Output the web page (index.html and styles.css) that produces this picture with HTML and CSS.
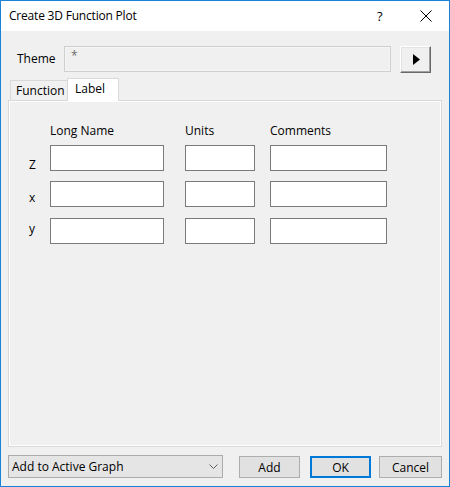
FILE: index.html
```html
<!DOCTYPE html>
<html>
<head>
<meta charset="utf-8">
<link rel="stylesheet" href="styles.css">
</head>
<body>
<div class="window">
  <div class="titlebar">
    <span class="title">Create 3D Function Plot</span>
    <span class="help">?</span>
    <svg class="close" width="12" height="12" viewBox="0 0 12 12"><path d="M0.5 0.5 L11.5 11.5 M11.5 0.5 L0.5 11.5" stroke="#000" stroke-width="1" fill="none"/></svg>
  </div>
  <div class="body">
    <div class="theme-row">
      <span class="theme-label">Theme</span>
      <div class="theme-input">*</div>
      <div class="arrow-btn"><svg width="7" height="11" viewBox="0 0 7 11"><path d="M0 0 L7 5.5 L0 11 Z" fill="#000"/></svg></div>
    </div>
    <div class="tabs">
      <div class="tab">Function</div>
      <div class="tab active">Label</div>
    </div>
    <div class="panel">
      <div class="grid head-row">
        <span></span>
        <span class="head">Long Name</span>
        <span class="head">Units</span>
        <span class="head">Comments</span>
      </div>
      <div class="grid row r1">
        <span class="rlbl rz">Z</span>
        <span class="field w-long"></span>
        <span class="field w-units"></span>
        <span class="field w-comm"></span>
      </div>
      <div class="grid row r2">
        <span class="rlbl rx">x</span>
        <span class="field w-long"></span>
        <span class="field w-units"></span>
        <span class="field w-comm"></span>
      </div>
      <div class="grid row r3">
        <span class="rlbl ry">y</span>
        <span class="field w-long"></span>
        <span class="field w-units"></span>
        <span class="field w-comm"></span>
      </div>
    </div>
    <div class="bottom">
      <div class="combo"><span>Add to Active Graph</span><svg width="9" height="5" viewBox="0 0 9 5"><path d="M0.5 0.5 L4.5 4.5 L8.5 0.5" stroke="#606060" stroke-width="1" fill="none"/></svg></div>
      <div class="btn add">Add</div>
      <div class="btn ok">OK</div>
      <div class="btn cancel">Cancel</div>
    </div>
  </div>
</div>
</body>
</html>
```
FILE: styles.css
```css
* { box-sizing: border-box; }
html, body { margin: 0; padding: 0; }
body {
  width: 450px;
  height: 487px;
  font-family: "Open Sans", "Noto Sans", sans-serif;
  font-size: 12px;
  color: #000;
  background: #fff;
}
.window {
  width: 450px;
  height: 487px;
  border: 1px solid #1883d7;
  display: flex;
  flex-direction: column;
}
.titlebar {
  height: 30px;
  background: #fff;
  display: flex;
  align-items: center;
  padding-left: 8px;
  line-height: 30px;
}
.title { flex: 1; letter-spacing: -0.2px; }
.help { width: 12px; margin-right: 31px; font-size: 13px; }
.close { margin-right: 17px; }
.body {
  flex: 1;
  background: #f0f0f0;
  display: flex;
  flex-direction: column;
  padding: 15px 7px 8px 7px;
}
.theme-row {
  display: flex;
  align-items: flex-start;
  padding-left: 9px;
  height: 27px;
}
.theme-label {
  width: 47px;
  line-height: 25px;
}
.theme-input {
  width: 327px;
  height: 26px;
  border: 1px solid #cfcfcf;
  box-shadow: inset 0 0 0 1px #f5f5f5;
  background: #f0f0f0;
  color: #6d6d6d;
  padding-left: 6px;
  line-height: 18px;
}
.arrow-btn {
  margin-left: 9px;
  width: 31px;
  height: 27px;
  border: 1px solid;
  border-color: #fff #696969 #696969 #fff;
  box-shadow: inset -1px -1px 0 #a0a0a0, inset 1px 1px 0 #e3e3e3;
  background: #f0f0f0;
  display: flex;
  align-items: center;
  justify-content: center;
  padding-left: 1px;
}
.tabs {
  display: flex;
  align-items: flex-end;
  margin: 5px 0 -1px 2px;
  position: relative;
  z-index: 1;
  height: 23px;
}
.tab {
  height: 21px;
  width: 58px;
  border: 1px solid #d9d9d9;
  background: #f0f0f0;
  padding-left: 5px;
  line-height: 19px;
}
.tab.active {
  height: 23px;
  width: 52px;
  margin-left: -1px;
  background: #fff;
  border-bottom: none;
  padding-left: 7px;
  line-height: 20px;
}
.panel {
  flex: 1;
  border: 1px solid #d9d9d9;
  box-shadow: inset 0 0 0 1px #fff;
  background: #f0f0f0;
  padding: 22px 0 0 20px;
}
.grid {
  display: grid;
  grid-template-columns: 21px 135px 85px 117px;
  align-items: start;
}
.head-row { height: 22px; }
.head { line-height: 16px; }
.row { height: 26px; }
.r2 { margin-top: 10px; }
.r3 { margin-top: 11px; }
.field {
  height: 26px;
  border: 1px solid #7a7a7a;
  background: #fff;
  display: block;
}
.w-long { width: 114px; }
.w-units { width: 70px; }
.w-comm { width: 117px; }
.rlbl { line-height: 16px; }
.rz { padding-top: 12px; }
.rx { padding-top: 9px; }
.ry { padding-top: 3px; }
.bottom {
  display: flex;
  align-items: flex-start;
  margin-top: 8px;
  height: 23px;
}
.combo {
  width: 215px;
  height: 23px;
  border: 1px solid #acacac;
  background: #e5e5e5;
  display: flex;
  align-items: center;
  justify-content: space-between;
  padding: 0 4px 0 3px;
  margin-right: 16px;
}
.combo span { line-height: 20px; }
.btn {
  height: 22px;
  margin-top: 1px;
  border: 1px solid #adadad;
  background: #e1e1e1;
  display: flex;
  align-items: center;
  justify-content: center;
}
.add { width: 61px; margin-right: 10px; }
.ok { width: 61px; border: 2px solid #0078d7; margin-right: 8px; }
.cancel { width: 63px; }
```
